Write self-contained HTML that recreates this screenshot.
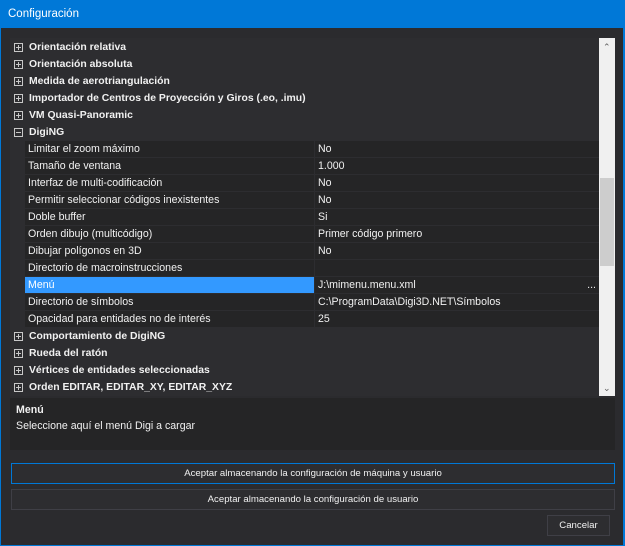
<!DOCTYPE html>
<html><head><meta charset="utf-8"><style>
*{margin:0;padding:0;box-sizing:border-box}
body{width:625px;height:546px;background:#0078d7;font-family:"Liberation Sans",sans-serif;font-size:10.6px;color:#f1f1f1;overflow:hidden;position:relative}
#title{position:absolute;left:0;top:0;width:625px;height:28px;background:#0078d7;color:#fff;font-size:11.5px;padding:8px 0 0 8px}
#win{position:absolute;left:1px;top:28px;width:622px;height:517px;background:#2b2b2e}
#grid{position:absolute;left:9px;top:10px;width:590px;height:358px;background:#2d2d30;overflow:hidden}
.r{position:absolute;left:0;height:17px;width:590px;line-height:17px;white-space:nowrap}
.c{font-weight:bold;padding-left:19px;font-size:10.4px}
.c i{position:absolute;left:4px;top:4px;width:9px;height:9px;border:1px solid #c8c8c8}
.c i:before{content:"";position:absolute;left:1px;top:3px;width:5px;height:1px;background:#c8c8c8}
.c i.p:after{content:"";position:absolute;left:3px;top:1px;width:1px;height:5px;background:#c8c8c8}
.p1{position:absolute;left:15px;top:0;width:289px;height:16px;background:#252526;padding-left:3px}
.p2{position:absolute;left:305px;top:0;width:285px;height:16px;background:#252526;padding-left:3px}
.sel .p1{background:#3399ff;color:#fff}
#sb{position:absolute;left:598px;top:10px;width:16px;height:358px;background:#f0f0f0}
#th{position:absolute;left:1px;top:140px;width:14px;height:88px;background:#cdcdcd}
#desc{position:absolute;left:9px;top:370px;width:605px;height:52px;background:#252526;padding:6px 6px}
.b{position:absolute;border:1px solid #3f3f46;background:#2d2d30;text-align:center;line-height:19px;color:#f1f1f1;font-size:9.6px}
</style></head><body>
<div id="title">Configuración</div>
<div id="win">
<div id="grid">
<div class="r c" style="top:1px"><i class="p"></i>Orientación relativa</div>
<div class="r c" style="top:18px"><i class="p"></i>Orientación absoluta</div>
<div class="r c" style="top:35px"><i class="p"></i>Medida de aerotriangulación</div>
<div class="r c" style="top:52px"><i class="p"></i>Importador de Centros de Proyección y Giros (.eo, .imu)</div>
<div class="r c" style="top:69px"><i class="p"></i>VM Quasi-Panoramic</div>
<div class="r c" style="top:86px"><i></i>DigiNG</div>
<div class="r" style="top:103px"><div class="p1">Limitar el zoom máximo</div><div class="p2">No</div></div>
<div class="r" style="top:120px"><div class="p1">Tamaño de ventana</div><div class="p2">1.000</div></div>
<div class="r" style="top:137px"><div class="p1">Interfaz de multi-codificación</div><div class="p2">No</div></div>
<div class="r" style="top:154px"><div class="p1">Permitir seleccionar códigos inexistentes</div><div class="p2">No</div></div>
<div class="r" style="top:171px"><div class="p1">Doble buffer</div><div class="p2">Si</div></div>
<div class="r" style="top:188px"><div class="p1">Orden dibujo (multicódigo)</div><div class="p2">Primer código primero</div></div>
<div class="r" style="top:205px"><div class="p1">Dibujar polígonos en 3D</div><div class="p2">No</div></div>
<div class="r" style="top:222px"><div class="p1">Directorio de macroinstrucciones</div><div class="p2"></div></div>
<div class="r sel" style="top:239px"><div class="p1">Menú</div><div class="p2">J:\mimenu.menu.xml<span style="position:absolute;right:4px">...</span></div></div>
<div class="r" style="top:256px"><div class="p1">Directorio de símbolos</div><div class="p2">C:\ProgramData\Digi3D.NET\Símbolos</div></div>
<div class="r" style="top:273px"><div class="p1">Opacidad para entidades no de interés</div><div class="p2">25</div></div>
<div class="r c" style="top:290px"><i class="p"></i>Comportamiento de DigiNG</div>
<div class="r c" style="top:307px"><i class="p"></i>Rueda del ratón</div>
<div class="r c" style="top:324px"><i class="p"></i>Vértices de entidades seleccionadas</div>
<div class="r c" style="top:341px"><i class="p"></i>Orden EDITAR, EDITAR_XY, EDITAR_XYZ</div>
</div>
<div id="sb"><div style="position:absolute;left:4px;top:4px;color:#606060;font-size:9px">&#8963;</div><div id="th"></div><div style="position:absolute;left:4px;bottom:2px;color:#606060;font-size:9px">&#8964;</div></div>
<div id="desc"><div style="font-weight:bold">Menú</div><div style="margin-top:4px">Seleccione aquí el menú Digi a cargar</div></div>
<div class="b" style="left:10px;top:435px;width:604px;height:21px;border-color:#0078d7">Aceptar almacenando la configuración de máquina y usuario</div>
<div class="b" style="left:10px;top:461px;width:604px;height:21px">Aceptar almacenando la configuración de usuario</div>
<div class="b" style="left:546px;top:487px;width:63px;height:21px">Cancelar</div>
</div>
</body></html>
